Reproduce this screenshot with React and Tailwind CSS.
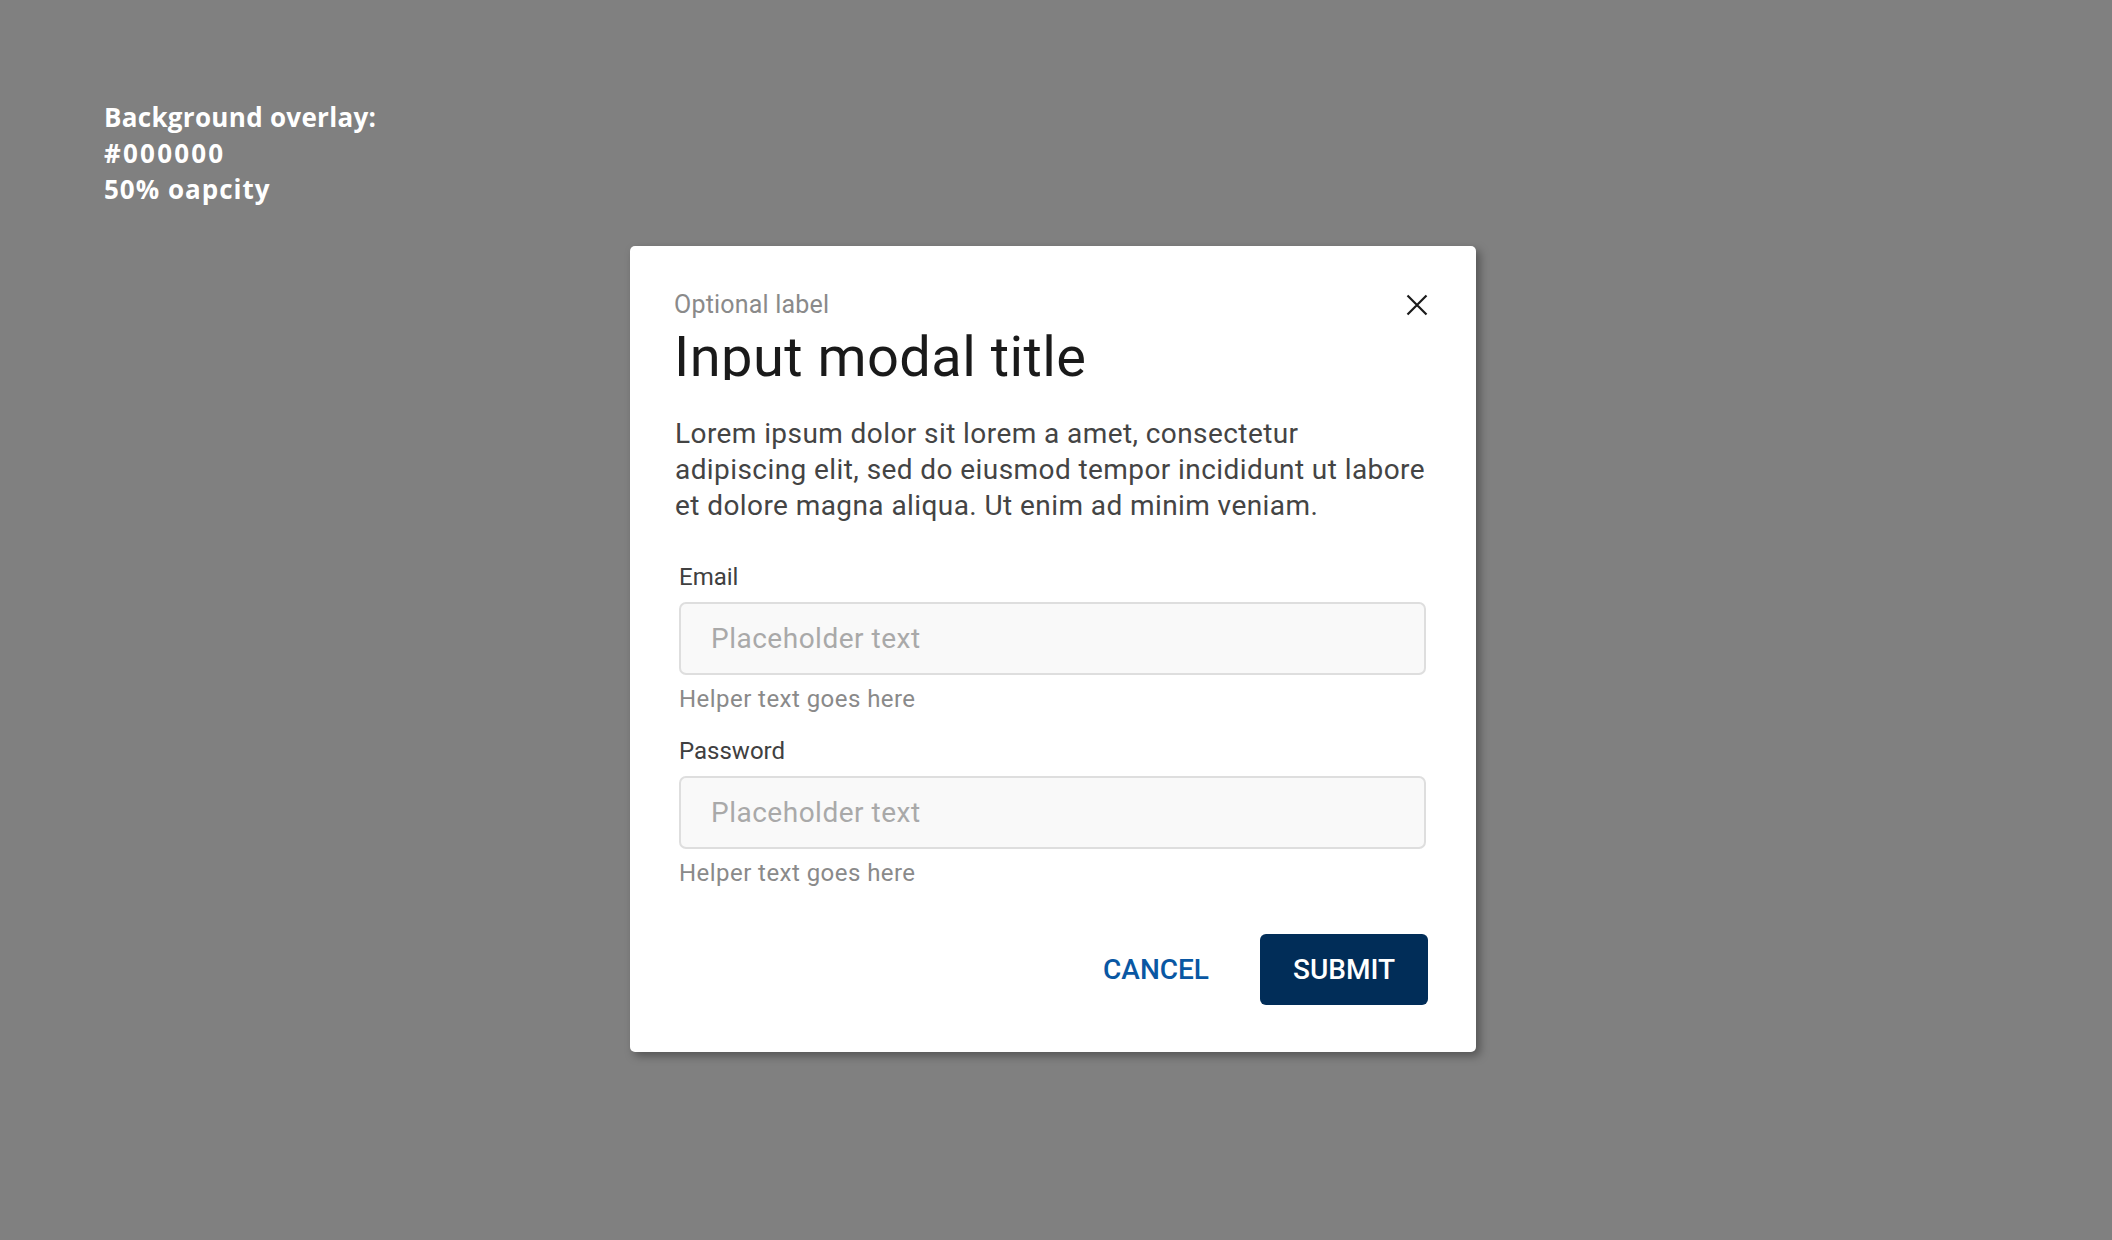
import React from "react";

function Field({ label }) {
  return (
    <div className="flex flex-col">
      <div className="text-[24px] leading-[28px] text-[#404040]">{label}</div>
      <input
        type="text"
        placeholder="Placeholder text"
        className="mt-[11px] h-[73px] w-full rounded-[7px] border-2 border-[#dedede] bg-[#f9f9f9] pl-[30px] text-[28px] tracking-[0.5px] text-[#333] outline-none placeholder:text-[#a9a9a9]"
      />
      <div className="mt-[10px] text-[24px] leading-[28px] tracking-[0.45px] text-[#8a8a8a]">Helper text goes here</div>
    </div>
  );
}

export default function App() {
  return (
    <div className="w-full h-[1240px] bg-[#808080] font-['Roboto',sans-serif] overflow-hidden">
      <div className="h-[207px] pt-[99px] pl-[104px] font-['Open_Sans',sans-serif] font-bold text-[26px] leading-[36px] text-white">
        <div className="tracking-[0.3px]">Background overlay:</div>
        <div className="tracking-[2.2px]">#000000</div>
        <div className="tracking-[1px]">50% oapcity</div>
      </div>

      <div className="ml-[630px] mt-[39px] w-[846px] h-[806px] rounded-[5px] bg-white shadow-[4px_4px_10px_rgba(0,0,0,0.35)] pt-[44px] pl-[44px] pr-[48px] flex flex-col">
        <div className="flex items-center justify-between h-[30px]">
          <div className="text-[25px] leading-[30px] text-[#8a8a8a] tracking-[0.2px]">Optional label</div>
          <svg width="22" height="22" viewBox="0 0 22 22" className="block">
            <path d="M1.5 1.5 L20.5 20.5 M20.5 1.5 L1.5 20.5" stroke="#1a1a1a" strokeWidth="2.2" strokeLinecap="butt" />
          </svg>
        </div>
        <div className="mt-[9px] h-[51px] overflow-hidden text-[56px] leading-[56px] tracking-[0.45px] text-[#1a1a1a]">Input modal title</div>
        <div className="mt-[36px] ml-[1px] text-[28px] leading-[36px] tracking-[0.42px] text-[#444444]">
          Lorem ipsum dolor sit lorem a amet, consectetur
          <br />
          adipiscing elit, sed do eiusmod tempor incididunt ut labore
          <br />
          et dolore magna aliqua. Ut enim ad minim veniam.
        </div>
        <div className="mt-[39px] ml-[5px] w-[747px] flex flex-col gap-[24px]">
          <Field label="Email" />
          <Field label="Password" />
        </div>
        <div className="mt-[47px] flex items-center justify-end">
          <button className="text-[28px] font-medium text-[#0957a3] leading-none">CANCEL</button>
          <button className="ml-[51px] h-[71px] w-[168px] rounded-[6px] bg-[#012d58] text-[28px] font-medium text-white leading-none">
            SUBMIT
          </button>
        </div>
      </div>
    </div>
  );
}
